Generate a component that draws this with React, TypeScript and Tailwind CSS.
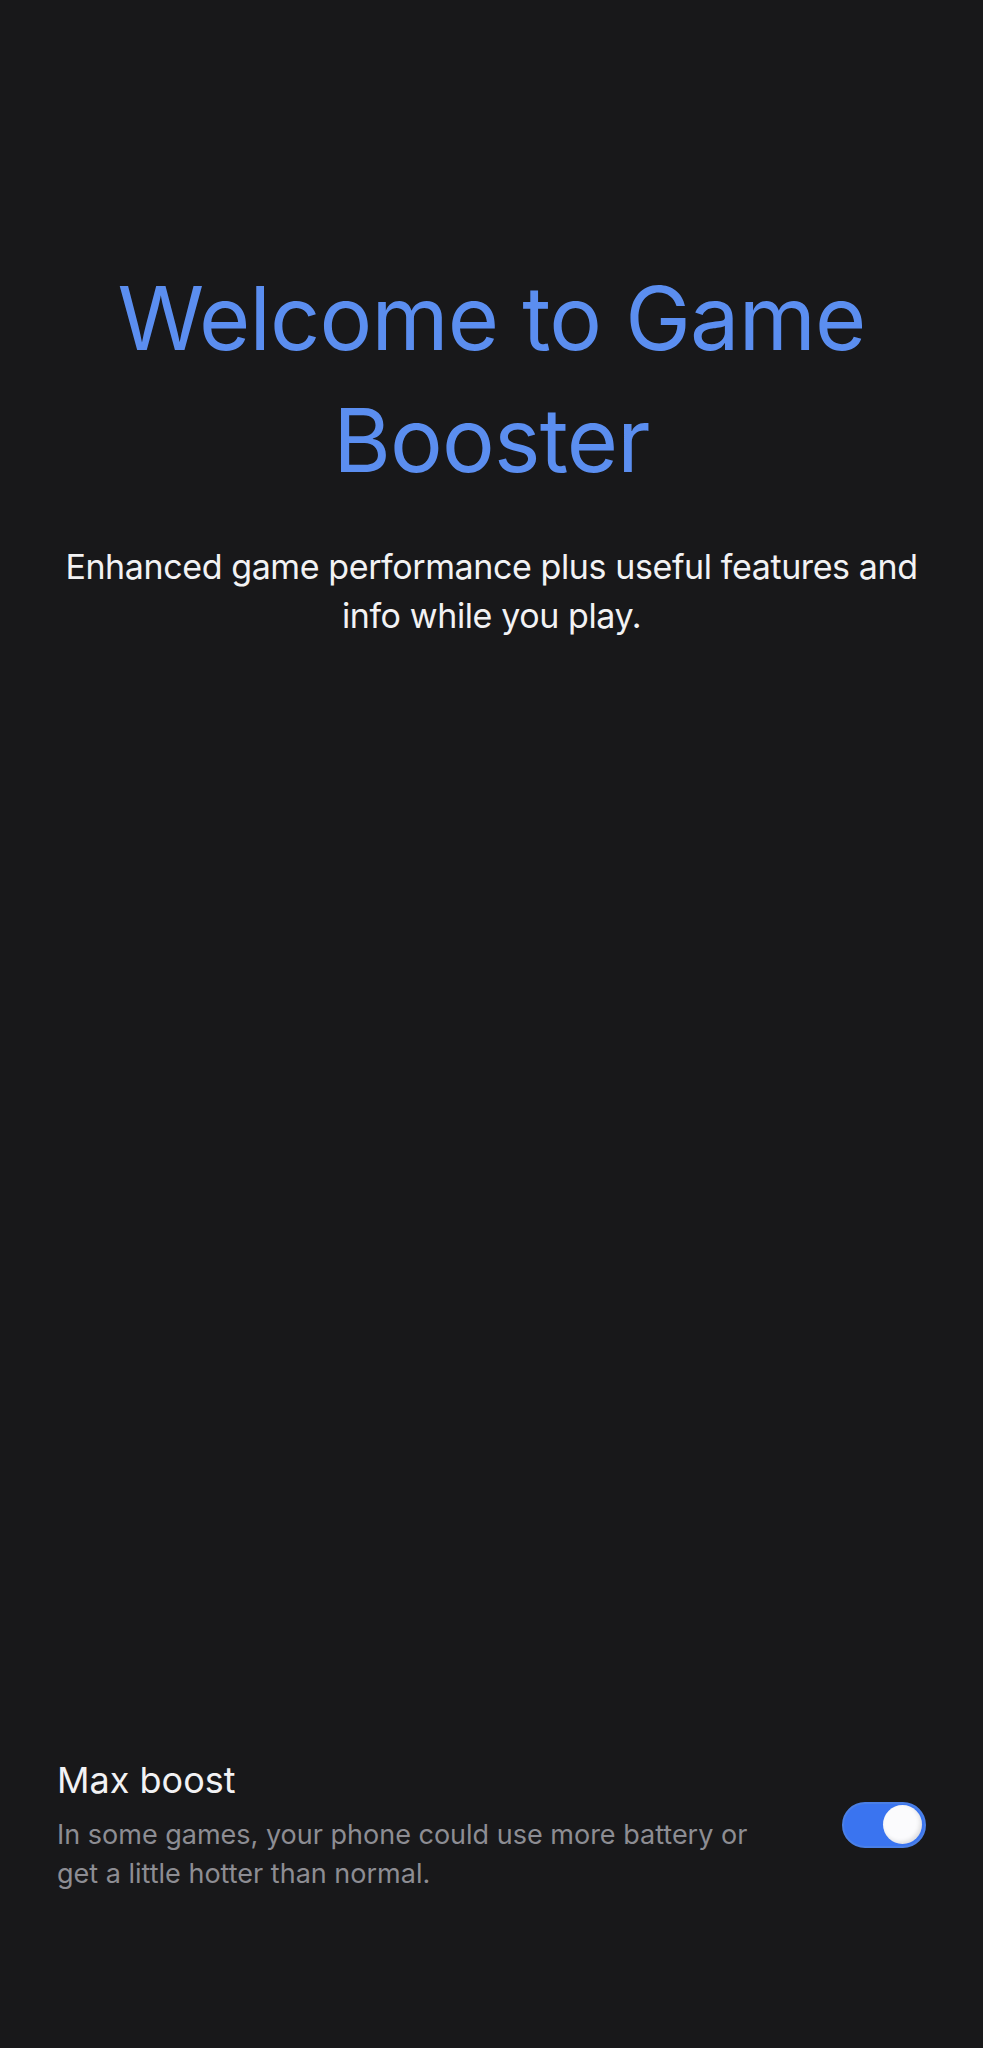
import { useState } from 'react';

// Game Booster onboarding screen: headline, blurb, and the Max boost toggle
// pinned to the bottom of the page.

function Toggle({ on, onChange }: { on: boolean; onChange: (v: boolean) => void }) {
  return (
    <button
      role="switch"
      aria-checked={on}
      onClick={() => onChange(!on)}
      className={`flex h-[46px] w-[84px] shrink-0 items-center rounded-full border-2 px-[2px] transition ${
        on ? 'justify-end border-[#4a7fe6] bg-[#3a74f0]' : 'justify-start border-[#5a5a60] bg-[#3a3a3f]'
      }`}
    >
      <span className="block h-[39px] w-[39px] rounded-full bg-[#fbfbfd] shadow-[inset_-2px_-2px_4px_rgba(0,0,0,0.12)]" />
    </button>
  );
}

export default function App() {
  const [maxBoost, setMaxBoost] = useState(true);
  return (
    <div className="flex min-h-[2048px] w-full flex-col bg-[#18181a] font-['Inter',sans-serif]">
      <div className="flex flex-col items-center px-[40px] pt-[257px] text-center">
        <h1 className="text-[88px] leading-[122px] font-normal tracking-[-0.8px] text-[#5b8ef0]">
          Welcome to Game Booster
        </h1>
        <p className="mt-[41px] text-[34px] leading-[49px] tracking-[-0.4px] text-[#f2f2f4]">
          Enhanced game performance plus useful features and info while you play.
        </p>
      </div>

      <div className="flex-1" />

      <div className="flex items-center justify-between gap-8 px-[57px] pb-[155px]">
        <div className="max-w-[700px]">
          <div className="text-[36px] leading-[48px] text-[#f2f2f4]">Max boost</div>
          <div className="mt-[11px] text-[27px] leading-[39px] text-[#8d8d93]">
            In some games, your phone could use more battery or get a little hotter than normal.
          </div>
        </div>
        <Toggle on={maxBoost} onChange={setMaxBoost} />
      </div>
    </div>
  );
}
